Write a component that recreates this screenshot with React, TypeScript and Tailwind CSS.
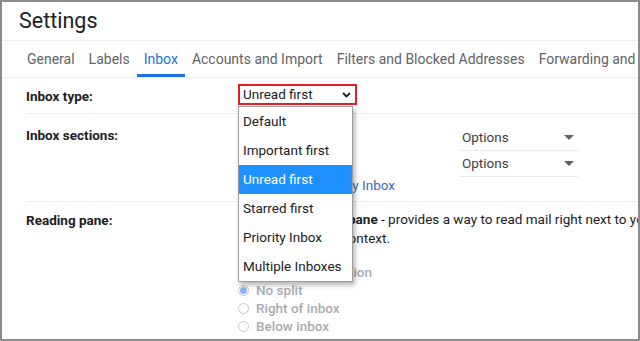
const FONT = { fontFamily: 'Roboto, "Liberation Sans", Arial, sans-serif' };

const TABS = ['General', 'Labels', 'Inbox', 'Accounts and Import', 'Filters and Blocked Addresses', 'Forwarding and POP/IMAP'];
const INBOX_TYPES = ['Default', 'Important first', 'Unread first', 'Starred first', 'Priority Inbox', 'Multiple Inboxes'];

function Caret() {
  return (
    <svg width="10" height="5" viewBox="0 0 10 5" className="shrink-0">
      <path d="M0 0h10L5 5z" fill="#5f6368" />
    </svg>
  );
}

function OptionsSelect() {
  return (
    <div className="flex h-[26px] w-[118px] items-center justify-between border-b border-[#e8eaed] pl-[2px] pr-[4px] text-[13.5px] text-[#3c4043]">
      <span>Options</span>
      <Caret />
    </div>
  );
}

function Radio({ label, checked }: { label: string; checked?: boolean }) {
  return (
    <div className="flex h-[18px] items-center gap-[7px]">
      <span className="flex h-[11px] w-[11px] items-center justify-center rounded-full border border-[#c4c7cc]">
        {checked && <span className="h-[7px] w-[7px] rounded-full bg-[#8ab4f8]" />}
      </span>
      <span className="text-[13.5px] font-medium text-[#a8abb0]">{label}</span>
    </div>
  );
}

export default function App() {
  return (
    <div className="relative h-[341px] w-[640px] overflow-hidden border-2 border-[#8c8c8c] bg-white" style={FONT}>
      <div className="flex h-[39px] items-center border-b border-[#eceff1] pl-[17px]">
        <h1 className="text-[21.5px] leading-none text-[#202124]">Settings</h1>
      </div>

      <nav className="flex h-[37px] items-stretch border-b border-[#eceff1] pl-[18px] whitespace-nowrap">
        {TABS.map(t => (
          <div
            key={t}
            className={
              'flex shrink-0 items-center px-[7px] text-[14px] ' +
              (t === 'Inbox' ? 'border-b-[3px] border-[#1a73e8] pt-[3px] text-[#1a73e8]' : 'text-[#5f6368]')
            }
          >
            {t}
          </div>
        ))}
      </nav>

      <div className="pl-[24px]">
        <div className="flex h-[36px] items-start border-b border-[#eceff1]">
          <div className="w-[212px] shrink-0 pt-[8px] text-[13.5px] font-bold text-[#202124]">Inbox type:</div>
          <div className="pt-[6px]">
            <div className="flex h-[21px] w-[119px] items-center justify-between border-2 border-[#e41e26] pl-[3px] pr-[4px] text-[13.5px] text-[#202124]">
              <span>Unread first</span>
              <svg width="9" height="6" viewBox="0 0 9 6">
                <path d="M1 1l3.5 3.5L8 1" fill="none" stroke="#202124" strokeWidth="1.8" />
              </svg>
            </div>
          </div>
        </div>

        <div className="flex h-[88px] items-start border-b border-[#eceff1]">
          <div className="w-[212px] shrink-0 pt-[11px] text-[13.5px] font-bold text-[#202124]">Inbox sections:</div>
          <div className="flex flex-col">
            <div className="flex flex-col pl-[222px] pt-[11px]">
              <OptionsSelect />
              <OptionsSelect />
            </div>
            <div className="mt-[-2px] w-[157px] overflow-hidden text-right text-[13.5px] whitespace-nowrap text-[#3e68c5]">
              Customize Priority Inbox
            </div>
          </div>
        </div>

        <div className="flex items-start">
          <div className="w-[212px] shrink-0 pt-[8px] text-[13.5px] font-bold text-[#202124]">Reading pane:</div>
          <div className="flex flex-col pt-[7px] text-[13.5px] whitespace-nowrap text-[#202124]">
            <div className="h-[19px] pl-[110px]">
              <b>pane</b> - provides a way to read mail right next to your list of conversations
            </div>
            <div className="h-[19px] w-[152px] text-right">context.</div>
            <div className="mt-[15px] h-[19px] w-[134px] text-right font-medium text-[#a8abb0]">position</div>
            <div className="flex flex-col">
              <Radio label="No split" checked />
              <Radio label="Right of inbox" />
              <Radio label="Below inbox" />
            </div>
          </div>
        </div>
      </div>

      <div className="absolute left-[236px] top-[104px] z-10 w-[115px] border border-[#9e9e9e] bg-white shadow-[2px_3px_5px_rgba(0,0,0,0.3)]">
        {INBOX_TYPES.map(o => (
          <div
            key={o}
            className={
              'flex h-[29px] items-center pl-[4px] text-[13.5px] ' +
              (o === 'Unread first' ? 'bg-[#1e90ff] text-white' : 'text-[#202124]')
            }
          >
            {o}
          </div>
        ))}
      </div>
    </div>
  );
}
